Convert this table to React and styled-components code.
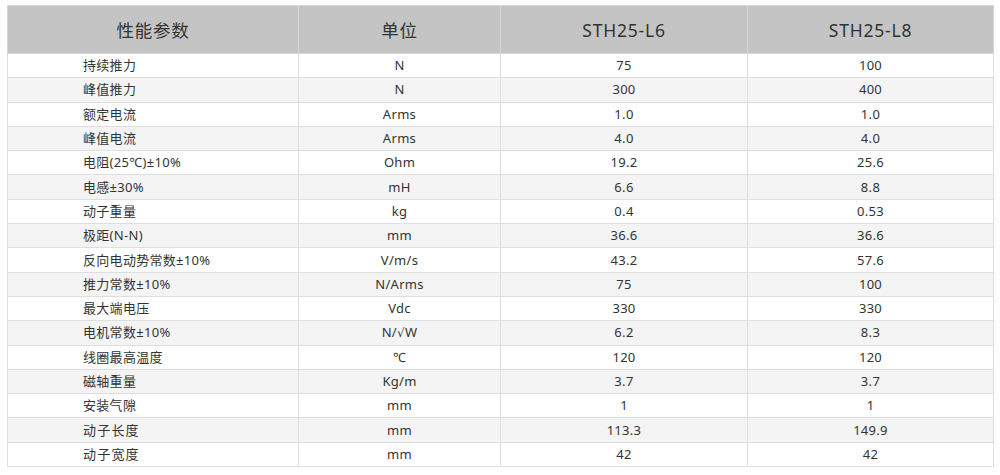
import styled, { createGlobalStyle } from "styled-components";

const GlobalStyle = createGlobalStyle`
  * {
    margin: 0;
    padding: 0;
    box-sizing: border-box;
  }
  body {
    background: #fff;
    font-family: "Noto Sans", "Noto Sans CJK SC", sans-serif;
    color: #333;
  }
`;

const Pagina = styled.div`
  padding: 5px 7px 0 7px;
`;

const Coluna = styled.col`
  width: ${(p) => p.$largura}px;
`;

const Tabela = styled.table`
  width: 986px;
  border-collapse: collapse;
  table-layout: fixed;

  th,
  td {
    border: 1.5px solid #dedede;
    text-align: center;
    white-space: nowrap;
  }
  th {
    height: 48px;
    background-color: #c4c4c4;
    border-color: #d6d6d6;
    color: #333;
    font-weight: normal;
    font-size: 17.5px;
    letter-spacing: 0.8px;
  }
  td {
    height: 24.3px;
    font-size: 13px;
    color: #333;
    line-height: 1;
    letter-spacing: 0.3px;
  }
`;

const Linha = styled.tr`
  background-color: ${(p) => (p.$par ? "#f4f4f4" : "#fff")};
`;

const Nome = styled.td`
  && {
    text-align: left;
    padding-left: 75px;
    letter-spacing: ${(p) => (p.$largo ? "1.2px" : "0.3px")};
  }
`;

const Raiz = styled.span`
  font-family: "DejaVu Sans", sans-serif;
  font-size: 12px;
`;

const larguras = [291, 202, 247, 246];

const dados = [
  ["持续推力", "N", "75", "100"],
  ["峰值推力", "N", "300", "400"],
  ["额定电流", "Arms", "1.0", "1.0"],
  ["峰值电流", "Arms", "4.0", "4.0"],
  ["电阻(25℃)±10%", "Ohm", "19.2", "25.6"],
  ["电感±30%", "mH", "6.6", "8.8"],
  ["动子重量", "kg", "0.4", "0.53"],
  ["极距(N-N)", "mm", "36.6", "36.6"],
  ["反向电动势常数±10%", "V/m/s", "43.2", "57.6"],
  ["推力常数±10%", "N/Arms", "75", "100"],
  ["最大端电压", "Vdc", "330", "330"],
  [
    "电机常数±10%",
    <>
      N/<Raiz>√</Raiz>W
    </>,
    "6.2",
    "8.3",
  ],
  ["线圈最高温度", "℃", "120", "120"],
  ["磁轴重量", "Kg/m", "3.7", "3.7"],
  ["安装气隙", "mm", "1", "1"],
  ["动子长度", "mm", "113.3", "149.9", true],
  ["动子宽度", "mm", "42", "42", true],
];

const App = () => {
  return (
    <>
      <GlobalStyle />
      <Pagina>
        <Tabela>
          <colgroup>
            {larguras.map((l, i) => (
              <Coluna key={i} $largura={l} />
            ))}
          </colgroup>
          <thead>
            <tr>
              <th>性能参数</th>
              <th>单位</th>
              <th>STH25-L6</th>
              <th>STH25-L8</th>
            </tr>
          </thead>
          <tbody>
            {dados.map((linha, i) => (
              <Linha key={linha[0]} $par={i % 2 === 1}>
                <Nome $largo={linha[4]}>{linha[0]}</Nome>
                <td>{linha[1]}</td>
                <td>{linha[2]}</td>
                <td>{linha[3]}</td>
              </Linha>
            ))}
          </tbody>
        </Tabela>
      </Pagina>
    </>
  );
};
export default App;
